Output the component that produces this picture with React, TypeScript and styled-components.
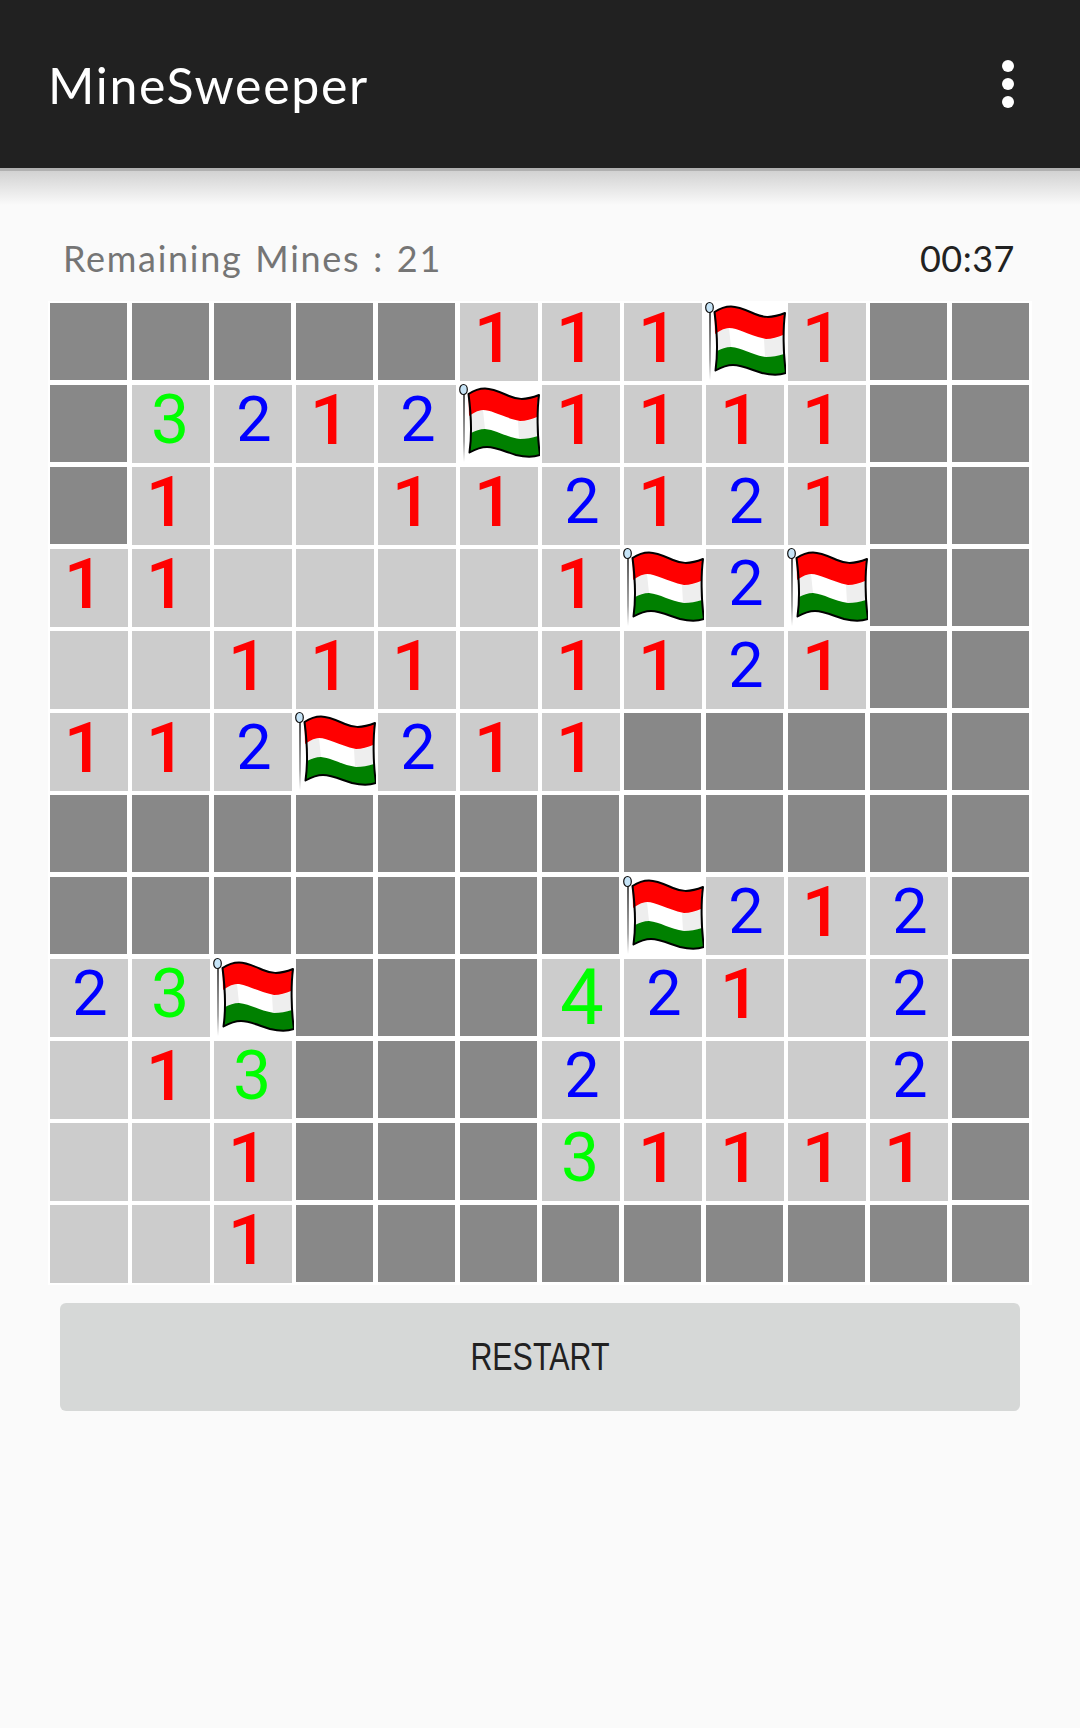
import React from 'react';
import styled, { createGlobalStyle } from 'styled-components';

const GlobalStyle = createGlobalStyle`
  html, body {
    margin: 0;
    padding: 0;
    background: #fafafa;
  }
  * {
    box-sizing: border-box;
  }
`;

const Page = styled.div`
  width: 1080px;
  height: 1728px;
  overflow: hidden;
  background: #fafafa;
  font-family: Lato, 'Open Sans', sans-serif;
`;

const Toolbar = styled.header`
  height: 168px;
  background: #212121;
  display: flex;
  align-items: center;
  justify-content: space-between;
  padding: 0 66px 0 48px;
`;

const Title = styled.h1`
  margin: 2px 0 0;
  font-size: 50px;
  font-weight: 400;
  line-height: 1;
  color: #fff;
  letter-spacing: 1.7px;
`;

const MenuButton = styled.div`
  display: flex;
  flex-direction: column;
  gap: 6px;
`;

const MenuDot = styled.span`
  width: 12px;
  height: 12px;
  border-radius: 50%;
  background: #fff;
`;

const ToolbarShadow = styled.div`
  height: 37px;
  background: linear-gradient(#b0b0b0 0, #b0b0b0 3px, #d2d2d2 3px, #fafafa 100%);
`;

const StatusRow = styled.div`
  height: 96px;
  padding: 9px 65px 0 63px;
  display: flex;
  align-items: center;
  justify-content: space-between;
  font-size: 36px;
  line-height: 1;
`;

const Remaining = styled.span`
  color: #757575;
  letter-spacing: 1.7px;
  word-spacing: 2px;
`;

const Timer = styled.span`
  color: #212121;
  letter-spacing: 0.5px;
`;

const Board = styled.div`
  width: 984px;
  margin-left: 48px;
  display: grid;
  grid-template-columns: repeat(12, 82px);
  grid-auto-rows: 82px;
  background: #fff;
`;

const Closed = styled.div`
  margin: 2px;
  width: 77px;
  height: 77px;
  background: #888888;
`;

const Open = styled.div`
  margin: 2px;
  width: 78px;
  height: 78px;
  background: #cccccc;
`;

type DigitStyle = { color: string; size: number; weight: number; padding: string };

const digitStyles: Record<number, DigitStyle> = {
  1: { color: '#ff0000', size: 71, weight: 500, padding: '0 10px 10px 0' },
  2: { color: '#0000ff', size: 63, weight: 400, padding: '0 0 10px 2px' },
  3: { color: '#00ff00', size: 68, weight: 400, padding: '0 2px 8px 0' },
  4: { color: '#00ff00', size: 78, weight: 400, padding: '0 0 0 2px' },
};

const Digit = styled(Open)<{ $n: number }>`
  display: flex;
  align-items: center;
  justify-content: center;
  padding: ${(p) => digitStyles[p.$n].padding};
  color: ${(p) => digitStyles[p.$n].color};
  font-family: Roboto, 'Liberation Sans', sans-serif;
  font-weight: ${(p) => digitStyles[p.$n].weight};
  font-size: ${(p) => digitStyles[p.$n].size}px;
  line-height: 1;
`;

const FlagTile = styled.div`
  width: 82px;
  height: 82px;
`;

const RestartButton = styled.button`
  display: block;
  width: 960px;
  height: 108px;
  margin: 18px 0 0 60px;
  border: 0;
  border-radius: 6px;
  background: #d6d8d7;
  color: #212121;
  font-family: 'Liberation Sans', sans-serif;
  font-size: 38px;
  padding: 0;
`;

const RestartLabel = styled.span`
  display: inline-block;
  transform: scaleX(0.8);
`;

function Flag() {
  return (
    <FlagTile>
      <svg width="82" height="82" viewBox="0 -2 82 82">
        <defs>
          <linearGradient id="pole" x1="0" y1="0" x2="0" y2="1">
            <stop offset="0" stopColor="#555" />
            <stop offset="0.7" stopColor="#aaa" />
            <stop offset="1" stopColor="#fff" />
          </linearGradient>
        </defs>
        <rect x="5" y="9" width="2" height="68" fill="url(#pole)" />
        <ellipse cx="5.5" cy="4.5" rx="3.8" ry="5" fill="#c6e4f7" stroke="#111" strokeWidth="1.2" />
        <path
          d="M11 31 C 14 29 20 25 25 25 C 34 25 44 32 62 36 C 68 36 74 34 79 32 L 80 51 C 74 53 68 54 62 54 C 48 52 38 45 27 44 C 22 44 17 46 13 48 Z"
          fill="#ffffff"
        />
        <path
          d="M11 31 C 14 29 20 25 25 25 L 27 44 C 22 44 17 46 13 48 Z M 60 36 C 68 37 74 34 79 32 L 80 51 C 74 53 68 54 61 54 Z"
          fill="#eeeeee"
        />
        <path
          d="M10.5 9 C 15 6 21 3.5 27 3.5 C 35 3.5 44 8 51 11 C 58 14 66 16 81 10 C 79 18 79 25 79 32 C 74 34 68 36 62 36 C 44 32 34 25 25 25 C 20 25 14 29 11 31 Z"
          fill="#ff0000"
        />
        <path
          d="M13 48 C 17 46 22 44 27 44 C 38 45 48 52 62 54 C 68 54 74 53 80 51 C 80 58 81 64 82 70 C 74 73 66 72 58 70 C 48 67 38 62 29 62 C 22 62 16 65 11.5 67.5 C 12.5 61 13 54 13 48 Z"
          fill="#008000"
        />
        <path
          d="M10.5 9 C 15 6 21 3.5 27 3.5 C 35 3.5 44 8 51 11 C 58 14 66 16 81 10 C 79 25 79 50 82 70 C 74 73 66 72 58 70 C 48 67 38 62 29 62 C 22 62 16 65 11.5 67.5 C 14 50 13 28 10.5 9 Z"
          fill="none"
          stroke="#000"
          strokeWidth="2"
          strokeLinejoin="round"
        />
      </svg>
    </FlagTile>
  );
}

// d closed, . open and empty, F flag, digits open with a count
const rows = [
  'ddddd111F1dd',
  'd3212F1111dd',
  'd1..112121dd',
  '11....1F2Fdd',
  '..111.1121dd',
  '112F211ddddd',
  'dddddddddddd',
  'dddddddF212d',
  '23Fddd421.2d',
  '.13ddd2...2d',
  '..1ddd31111d',
  '..1ddddddddd',
];

function Cell({ kind }: { kind: string }) {
  if (kind === 'd') return <Closed />;
  if (kind === '.') return <Open />;
  if (kind === 'F') return <Flag />;
  return <Digit $n={Number(kind)}>{kind}</Digit>;
}

function App() {
  return (
    <Page>
      <GlobalStyle />
      <Toolbar>
        <Title>MineSweeper</Title>
        <MenuButton>
          <MenuDot />
          <MenuDot />
          <MenuDot />
        </MenuButton>
      </Toolbar>
      <ToolbarShadow />
      <StatusRow>
        <Remaining>Remaining Mines : 21</Remaining>
        <Timer>00:37</Timer>
      </StatusRow>
      <Board>
        {rows.map((row, r) =>
          row.split('').map((kind, c) => <Cell key={`${r}-${c}`} kind={kind} />),
        )}
      </Board>
      <RestartButton>
        <RestartLabel>RESTART</RestartLabel>
      </RestartButton>
    </Page>
  );
}

export default App;
